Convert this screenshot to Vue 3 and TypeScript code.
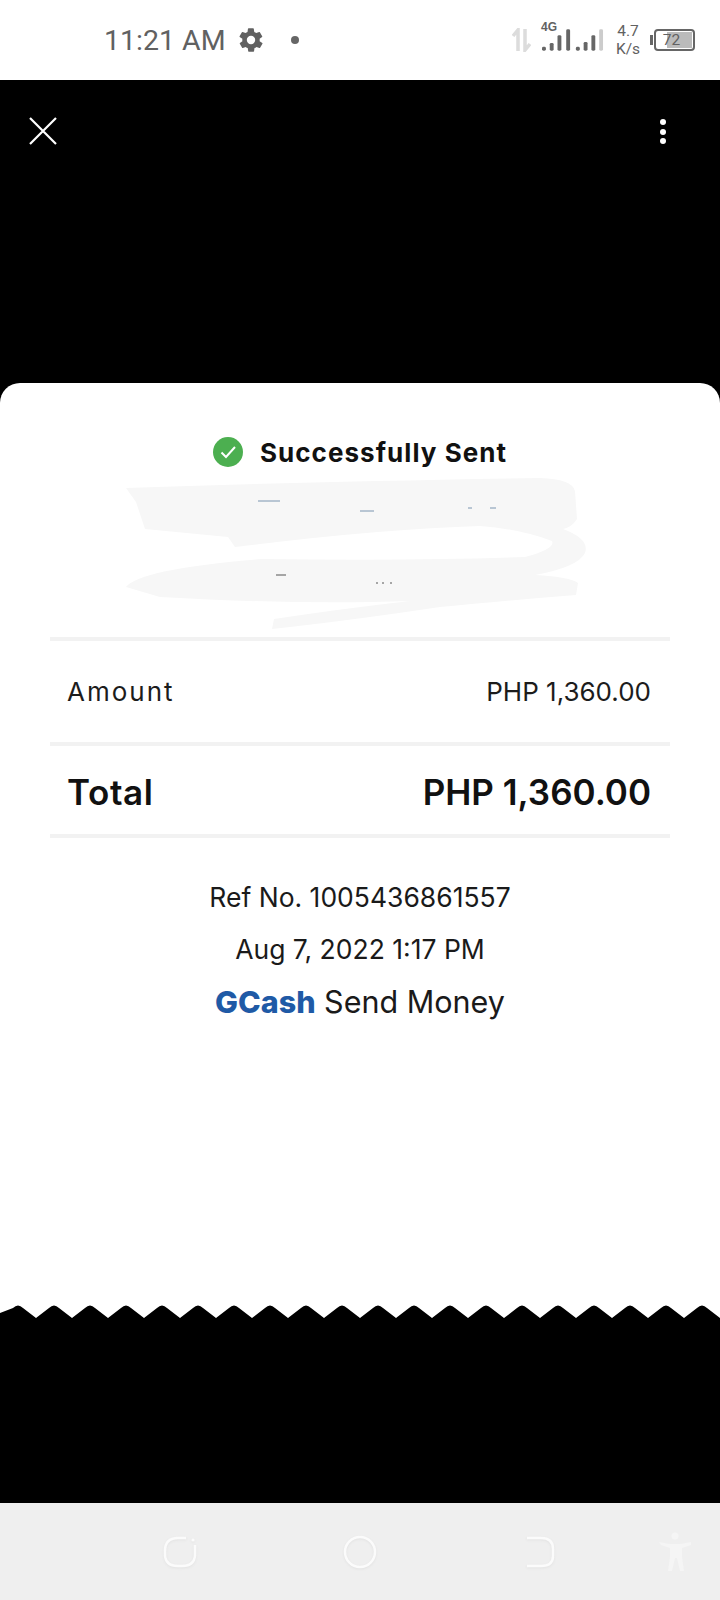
<template>
  <div class="screen">
    <div class="status-bar">
      <span class="time">11:21 AM</span>
      <svg class="gear" viewBox="0 0 24 24"><path d="M19.4 13a7.6 7.6 0 0 0 0-2l2.1-1.6a.5.5 0 0 0 .1-.6l-2-3.5a.5.5 0 0 0-.6-.2l-2.5 1a7.4 7.4 0 0 0-1.7-1l-.4-2.7a.5.5 0 0 0-.5-.4h-4a.5.5 0 0 0-.5.4l-.4 2.7a7.4 7.4 0 0 0-1.7 1l-2.5-1a.5.5 0 0 0-.6.2l-2 3.5a.5.5 0 0 0 .1.6L4.6 11a7.6 7.6 0 0 0 0 2l-2.1 1.6a.5.5 0 0 0-.1.6l2 3.5c.1.2.4.3.6.2l2.5-1c.5.4 1.1.7 1.7 1l.4 2.7c0 .2.2.4.5.4h4c.3 0 .5-.2.5-.4l.4-2.7a7.4 7.4 0 0 0 1.7-1l2.5 1c.2.1.5 0 .6-.2l2-3.5a.5.5 0 0 0-.1-.6L19.4 13zM12 15.6a3.6 3.6 0 1 1 0-7.2 3.6 3.6 0 0 1 0 7.2z" /></svg>
      <span class="dot"></span>
      <div class="status-right">
        <svg class="arrows" viewBox="0 0 19 24"><path d="M6 23V2L1 8M13 1v21l5-6" /></svg>
        <div class="signal">
          <span class="net">4G</span>
          <svg class="bars" viewBox="0 0 64 26">
            <rect v-for="b in bars" :key="b.x" :x="b.x" :y="25 - b.h" width="4" :height="b.h" rx="1.5" :fill="b.fill" />
          </svg>
        </div>
        <div class="speed"><span>4.7</span><span>K/s</span></div>
        <div class="battery">
          <span class="nub"></span>
          <div class="cell"><span class="level"></span><span class="pct">72</span></div>
        </div>
      </div>
    </div>

    <div class="viewer">
      <div class="toolbar">
        <svg class="close" viewBox="0 0 30 30"><path d="M2 2l26 26M28 2L2 28" /></svg>
        <div class="more"><i></i><i></i><i></i></div>
      </div>

      <div class="receipt">
        <div class="title">
          <svg class="check" viewBox="0 0 30 30">
            <circle cx="15" cy="15" r="15" fill="#4caf50" />
            <path d="M8.5 15.5l4.5 4.5 9-10" fill="none" stroke="#fff" stroke-width="2" />
          </svg>
          <span>Successfully Sent</span>
        </div>

        <svg class="scribble" viewBox="0 0 720 160">
          <path d="M126 11 Q300 5 540 1 Q572 2 575 14 L577 42 Q572 50 563 52 Q590 62 585 76 Q578 90 535 98 Q570 100 578 106 L576 118 Q500 124 440 130 Q360 142 290 150 L272 152 L274 142 Q340 132 410 124 Q300 128 160 120 L126 110 Q140 92 262 82 Q420 84 525 80 Q556 72 552 64 Q520 52 480 49 Q380 52 235 70 L228 60 L145 52 L136 25 Z" fill="#f7f7f7" />
          <path d="M258 24h22M360 34h14M468 31h4M490 31h6" stroke="#7a95b0" stroke-width="1" />
          <path d="M276 98h10M376 106h2M382 106h2M390 106h2" stroke="#555" stroke-width="1" />
        </svg>

        <div class="rule"></div>
        <div class="row">
          <span class="wide">Amount</span>
          <span>PHP 1,360.00</span>
        </div>
        <div class="rule"></div>
        <div class="row total">
          <span class="wide">Total</span>
          <span>PHP 1,360.00</span>
        </div>
        <div class="rule"></div>

        <div class="meta">
          <p>Ref No. 1005436861557</p>
          <p>Aug 7, 2022 1:17 PM</p>
          <p class="brand"><b>GCash</b> Send Money</p>
        </div>

        <svg class="zigzag" viewBox="0 0 720 13" preserveAspectRatio="none"><path :d="teeth" fill="#000" /></svg>
      </div>
    </div>

    <div class="nav">
      <svg class="nav-icon" viewBox="0 0 36 34"><path d="M24 3H16Q3 3 3 16v3q0 12 13 12h4q13 0 13-12V10" /><circle cx="31" cy="5" r="1.6" fill="#fbfbfb" stroke="none" /></svg>
      <svg class="nav-icon" viewBox="0 0 36 34"><circle cx="18" cy="17" r="15" /></svg>
      <svg class="nav-icon" viewBox="0 0 36 34"><path d="M5 3h14q12 0 12 11v7q0 10-12 10H5" /></svg>
      <svg class="person" viewBox="0 0 34 40"><circle cx="17" cy="4" r="3.5" /><path d="M1 10l11 2h10l11-2v3l-9 3v9l2 14h-4l-3-13h-2l-3 13h-4l2-14v-9l-9-3z" /></svg>
    </div>
  </div>
</template>

<script setup lang="ts">
const bars = [
  { x: 0, h: 4, fill: '#666' },
  { x: 8, h: 8, fill: '#666' },
  { x: 16, h: 16, fill: '#666' },
  { x: 25, h: 22, fill: '#666' },
  { x: 35, h: 4, fill: '#666' },
  { x: 43, h: 9, fill: '#666' },
  { x: 51, h: 16, fill: '#666' },
  { x: 59, h: 22, fill: '#ccc' }
]

// black teeth along the torn edge of the receipt, 36px apart
let teeth = 'M0 13 L0 8'
for (let x = 0; x < 720; x += 36) {
  teeth += ` L${x + 13} 3 Q${x + 18} -2 ${x + 23} 3 L${x + 36} 13`
}
teeth += ' Z'
</script>

<style>
html,
body {
  background: #000;
}
</style>

<style scoped>
.screen {
  width: 720px;
  height: 1600px;
  display: flex;
  flex-direction: column;
  font-family: "Inter", "Noto Sans", sans-serif;
  overflow: hidden;
}

/* status bar */
.status-bar {
  height: 80px;
  flex-shrink: 0;
  background: #fff;
  display: flex;
  align-items: center;
  padding: 0 25px 0 104px;
  box-sizing: border-box;
  color: #616161;
}

.time {
  font-family: "Roboto", sans-serif;
  font-size: 28.5px;
  white-space: nowrap;
}

.gear {
  width: 28px;
  height: 28px;
  margin-left: 11px;
  fill: #616161;
}

.dot {
  width: 8px;
  height: 8px;
  margin-left: 26px;
  border-radius: 50%;
  background: #666;
}

.status-right {
  margin-left: auto;
  display: flex;
  align-items: center;
}

.arrows {
  width: 19px;
  height: 24px;
  fill: none;
  stroke: #dcdcdc;
  stroke-width: 3.5;
}

.signal {
  position: relative;
  width: 62px;
  height: 26px;
  margin-left: 11px;
}

.bars {
  display: block;
  width: 62px;
  height: 26px;
  margin-top: -1px;
}

.net {
  position: absolute;
  left: -1px;
  top: -6px;
  font-family: "Liberation Sans", sans-serif;
  font-size: 12px;
  font-weight: 700;
  line-height: 12px;
}

.speed {
  display: flex;
  flex-direction: column;
  align-items: center;
  width: 26px;
  margin-left: 11px;
  font-family: "Roboto", sans-serif;
  font-size: 15.5px;
  line-height: 18px;
}

.battery {
  display: flex;
  align-items: center;
  margin-left: 9px;
}

.nub {
  width: 3px;
  height: 10px;
  background: #666;
  margin-right: 1px;
}

.cell {
  position: relative;
  width: 41px;
  height: 22px;
  box-sizing: border-box;
  border: 2px solid #666;
  border-radius: 4px;
  display: flex;
  align-items: center;
  justify-content: center;
}

.level {
  position: absolute;
  top: 1px;
  right: 1px;
  bottom: 1px;
  width: 25px;
  background: #bbb;
}

.pct {
  position: relative;
  font-family: "Roboto", sans-serif;
  font-size: 15.5px;
  margin-right: 6px;
}

/* black viewer */
.viewer {
  flex: 1;
  background: #000;
  display: flex;
  flex-direction: column;
}

.toolbar {
  height: 303px;
  flex-shrink: 0;
  display: flex;
  justify-content: space-between;
  align-items: flex-start;
  padding: 36px 54px 0 28px;
  box-sizing: border-box;
}

.close {
  width: 30px;
  height: 30px;
  fill: none;
  stroke: #fff;
  stroke-width: 2.2;
}

.more {
  display: flex;
  flex-direction: column;
  gap: 3.5px;
  margin-top: 3px;
}

.more i {
  width: 6px;
  height: 6px;
  border-radius: 50%;
  background: #fff;
}

.receipt {
  height: 935px;
  flex-shrink: 0;
  background: #fff;
  border-radius: 20px 20px 0 0;
  display: flex;
  flex-direction: column;
  align-items: center;
}

.title {
  display: flex;
  align-items: center;
  justify-content: center;
  gap: 17px;
  height: 30px;
  margin-top: 54px;
  font-size: 26px;
  font-weight: 700;
  color: #111;
  letter-spacing: 1.05px;
}

.check {
  width: 30px;
  height: 30px;
}

.scribble {
  display: block;
  width: 720px;
  height: 160px;
  flex-shrink: 0;
  margin-top: 10px;
}

.rule {
  width: 620px;
  height: 4px;
  flex-shrink: 0;
  background: #f2f2f2;
}

.row {
  width: 620px;
  height: 101px;
  box-sizing: border-box;
  padding: 0 19px 0 17px;
  display: flex;
  align-items: center;
  justify-content: space-between;
  font-size: 26px;
  color: #1c1c1c;
}

.row .wide {
  letter-spacing: 2px;
}

.total {
  height: 88px;
  padding-top: 4px;
  font-size: 35px;
  font-weight: 600;
  color: #111;
}

.total .wide {
  letter-spacing: 0.6px;
}

.meta {
  margin-top: 33px;
  text-align: center;
  font-size: 26.5px;
  color: #1a1a1a;
}

.meta p {
  margin: 0;
  height: 52px;
  line-height: 52px;
}

.meta .brand {
  font-size: 30.5px;
  line-height: 54px;
}

.meta b {
  color: #1f5aa6;
  font-weight: 800;
}

.zigzag {
  display: block;
  width: 720px;
  height: 13px;
  margin-top: auto;
  flex-shrink: 0;
}

/* system nav */
.nav {
  height: 97px;
  flex-shrink: 0;
  background: #efefef;
  display: flex;
  align-items: center;
  padding-left: 162px;
  box-sizing: border-box;
  gap: 144px;
}

.nav-icon {
  width: 36px;
  height: 34px;
  flex-shrink: 0;
  fill: none;
  stroke: #fbfbfb;
  stroke-width: 2.5;
  filter: drop-shadow(0 1px 1px #e2e2e2);
}

.person {
  width: 34px;
  height: 40px;
  flex-shrink: 0;
  margin-left: -44px;
  fill: #f5f5f5;
}
</style>
